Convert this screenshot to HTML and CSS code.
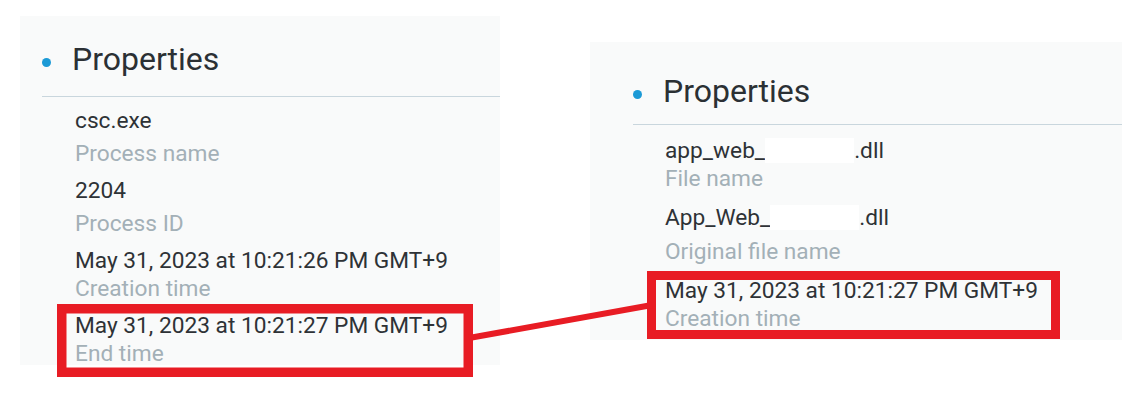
FILE: index.html
```html
<!DOCTYPE html>
<html lang="en">
<head>
    <meta charset="UTF-8">
    <title>Properties</title>
    <link rel="stylesheet" href="styles.css">
</head>
<body>
    <div class="panel panel-process">
        <div class="panel-header">
            <span class="bullet"></span>
            <h2>Properties</h2>
        </div>
        <div class="props">
            <div class="prop spaced">
                <div class="prop-value">csc.exe</div>
                <div class="prop-label">Process name</div>
            </div>
            <div class="prop spaced">
                <div class="prop-value">2204</div>
                <div class="prop-label">Process ID</div>
            </div>
            <div class="prop">
                <div class="prop-value">May 31, 2023 at 10:21:26 PM GMT+9</div>
                <div class="prop-label">Creation time</div>
            </div>
            <div class="prop">
                <div class="prop-value">May 31, 2023 at 10:21:27 PM GMT+9</div>
                <div class="prop-label">End time</div>
            </div>
        </div>
    </div>

    <div class="panel panel-file">
        <div class="panel-header">
            <span class="bullet"></span>
            <h2>Properties</h2>
        </div>
        <div class="props">
            <div class="prop">
                <div class="prop-value">app_web_<span class="redacted"></span>.dll</div>
                <div class="prop-label">File name</div>
            </div>
            <div class="prop spaced">
                <div class="prop-value">App_Web_<span class="redacted"></span>.dll</div>
                <div class="prop-label">Original file name</div>
            </div>
            <div class="prop">
                <div class="prop-value">May 31, 2023 at 10:21:27 PM GMT+9</div>
                <div class="prop-label">Creation time</div>
            </div>
        </div>
    </div>

    <!-- annotation drawn over both screenshots -->
    <svg class="annotation" width="1133" height="397" viewBox="0 0 1133 397">
        <rect x="61.75" y="308.75" width="406.5" height="63.5" fill="none" stroke="#e81c24" stroke-width="9.5"/>
        <rect x="651.5" y="275.5" width="404" height="59" fill="none" stroke="#e81c24" stroke-width="9"/>
        <line x1="469" y1="338" x2="652" y2="305" stroke="#e81c24" stroke-width="6"/>
    </svg>
</body>
</html>
```

FILE: styles.css
```css
body {
    margin: 0;
    width: 1133px;
    height: 397px;
    background-color: #ffffff;
    font-family: Roboto, "Liberation Sans", sans-serif;
    display: flex;
    align-items: flex-start;
    position: relative;
    overflow: hidden;
}

.panel {
    background-color: #f9fafa;
    box-sizing: border-box;
}

.panel-process {
    margin: 16px 0 0 20px;
    width: 480px;
    height: 349px;
    padding: 24px 0 0 22px;
}

.panel-file {
    margin: 42px 0 0 90px;
    width: 532px;
    height: 298px;
    padding: 30px 0 0 43px;
}

.panel-header {
    display: flex;
    align-items: center;
    gap: 21px;
    border-bottom: 1px solid #c9d6dd;
    padding-bottom: 18px;
}

.panel-file .panel-header {
    padding-bottom: 14px;
}

.bullet {
    width: 9px;
    height: 9px;
    border-radius: 50%;
    background-color: #1c9ad6;
    margin-top: 6px;
}

.panel-header h2 {
    margin: 0;
    font-size: 32px;
    font-weight: 400;
    line-height: 38px;
    color: #2b3034;
}

.props {
    display: flex;
    flex-direction: column;
    gap: 9px;
    padding: 10px 0 0 33px;
}

.panel-file .props {
    gap: 11px;
    padding: 12px 0 0 32px;
}

.prop-value,
.prop-label {
    font-size: 22.7px;
    line-height: 28px;
    white-space: nowrap;
}

.prop-value {
    color: #2e3236;
}

.prop-label {
    color: #a3b0b7;
}

.prop.spaced .prop-label {
    margin-top: 5px;
}

.panel-file .prop.spaced .prop-label {
    margin-top: 6px;
}

.redacted {
    display: inline-block;
    width: 89px;
    height: 25px;
    background-color: #ffffff;
    vertical-align: -5px;
}

.annotation {
    position: absolute;
    top: 0;
    left: 0;
    pointer-events: none;
}
```
